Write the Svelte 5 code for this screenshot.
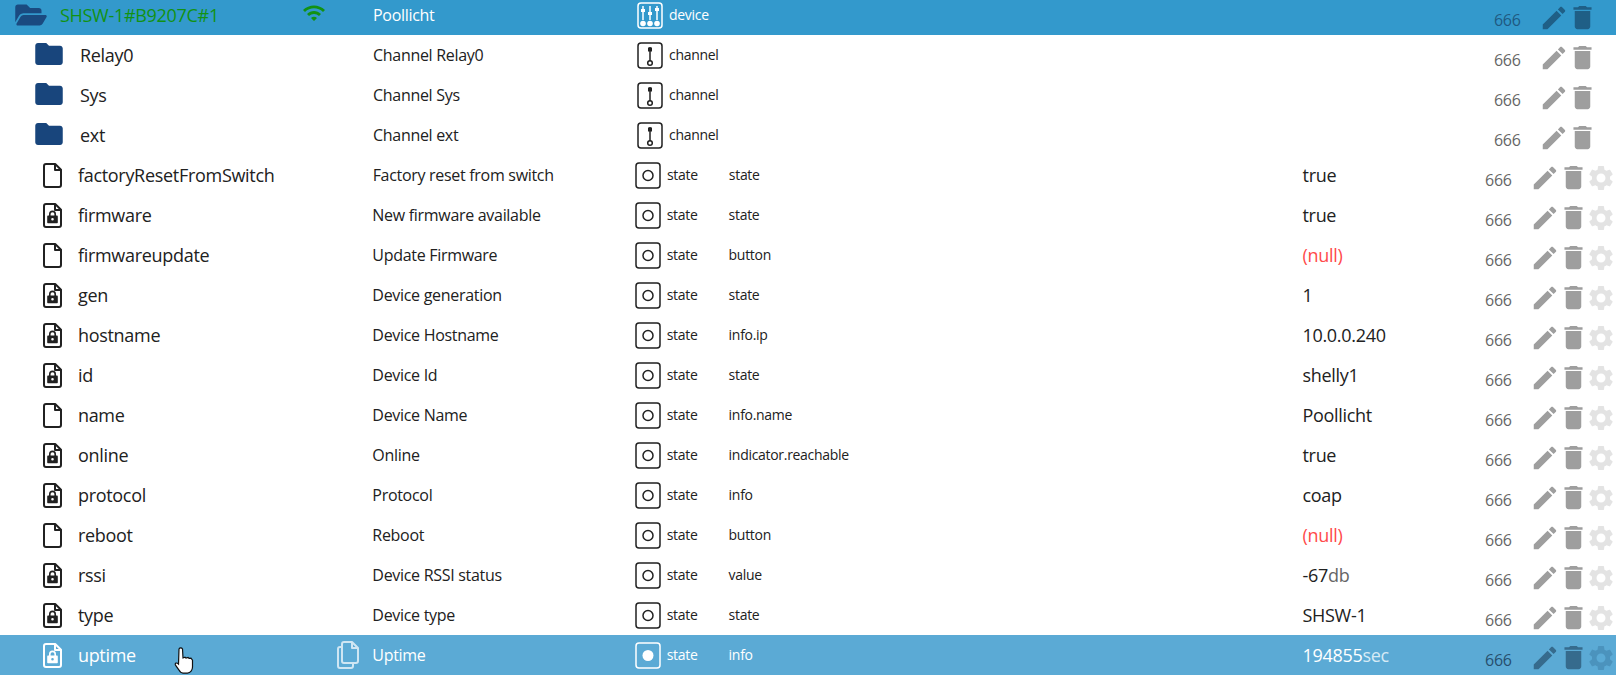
<script>
  const rows = [
    { kind: 'dev', icon: 'open', name: 'SHSW-1#B9207C#1', title: 'Poollicht', type: 'device' },
    { kind: 'chan', icon: 'folder', name: 'Relay0', title: 'Channel Relay0', type: 'channel' },
    { kind: 'chan', icon: 'folder', name: 'Sys', title: 'Channel Sys', type: 'channel' },
    { kind: 'chan', icon: 'folder', name: 'ext', title: 'Channel ext', type: 'channel' },
    { kind: 'st', icon: 'file', name: 'factoryResetFromSwitch', title: 'Factory reset from switch', type: 'state', role: 'state', value: 'true' },
    { kind: 'st', icon: 'lock', name: 'firmware', title: 'New firmware available', type: 'state', role: 'state', value: 'true' },
    { kind: 'st', icon: 'file', name: 'firmwareupdate', title: 'Update Firmware', type: 'state', role: 'button', value: '(null)', nul: true },
    { kind: 'st', icon: 'lock', name: 'gen', title: 'Device generation', type: 'state', role: 'state', value: '1' },
    { kind: 'st', icon: 'lock', name: 'hostname', title: 'Device Hostname', type: 'state', role: 'info.ip', value: '10.0.0.240' },
    { kind: 'st', icon: 'lock', name: 'id', title: 'Device Id', type: 'state', role: 'state', value: 'shelly1' },
    { kind: 'st', icon: 'file', name: 'name', title: 'Device Name', type: 'state', role: 'info.name', value: 'Poollicht' },
    { kind: 'st', icon: 'lock', name: 'online', title: 'Online', type: 'state', role: 'indicator.reachable', value: 'true' },
    { kind: 'st', icon: 'lock', name: 'protocol', title: 'Protocol', type: 'state', role: 'info', value: 'coap' },
    { kind: 'st', icon: 'file', name: 'reboot', title: 'Reboot', type: 'state', role: 'button', value: '(null)', nul: true },
    { kind: 'st', icon: 'lock', name: 'rssi', title: 'Device RSSI status', type: 'state', role: 'value', value: '-67', unit: 'db' },
    { kind: 'st', icon: 'lock', name: 'type', title: 'Device type', type: 'state', role: 'state', value: 'SHSW-1' },
    { kind: 'st', hover: true, icon: 'lock', name: 'uptime', title: 'Uptime', type: 'state', role: 'info', value: '194855', unit: 'sec' }
  ];
</script>

<div class="list">
  {#each rows as r}
    <div class="row {r.kind}" class:hover={r.hover}>
      <div class="ico">
        {#if r.icon === 'open'}
          <svg class="open" viewBox="0 0 576 512"><path d="M572.694 292.093L500.27 416.248A63.997 63.997 0 0 1 444.989 448H45.025c-18.523 0-30.064-20.093-20.731-36.093l72.424-124.155A64 64 0 0 1 152 256h399.964c18.523 0 30.064 20.093 20.73 36.093zM152 224h328v-48c0-26.51-21.49-48-48-48H272l-64-64H48C21.49 64 0 85.49 0 112v278.046l69.077-118.418C86.214 242.25 117.989 224 152 224z"/></svg>
        {:else if r.icon === 'folder'}
          <svg class="folder" viewBox="2 4 20 16"><path d="M10 4H4c-1.1 0-1.99.9-1.99 2L2 18c0 1.1.9 2 2 2h16c1.1 0 2-.9 2-2V8c0-1.1-.9-2-2-2h-8l-2-2z"/></svg>
        {:else}
          <svg class="file" viewBox="0 0 19 25">
            <path class="outline" d="M3 1h9.2L18 6.8V22a2 2 0 0 1-2 2H3a2 2 0 0 1-2-2V3a2 2 0 0 1 2-2z"/>
            <path class="outline" d="M12 1v6h6"/>
            {#if r.icon === 'lock'}
              <path class="lockbody" d="M5 12.6h1v-1.5a3.5 3.5 0 0 1 7 0v1.5h1a.8.8 0 0 1 .8.8v6a.8.8 0 0 1-.8.8H5a.8.8 0 0 1-.8-.8v-6a.8.8 0 0 1 .8-.8zm2.6 0h3.8v-1.5a1.9 1.9 0 0 0-3.8 0zM9.5 15a1.3 1.3 0 1 0 0 2.6 1.3 1.3 0 0 0 0-2.6z" fill-rule="evenodd"/>
            {/if}
          </svg>
        {/if}
      </div>
      <div class="name">{r.name}</div>
      <div class="conn">
        {#if r.kind === 'dev'}
          <svg viewBox="0 0 24 24"><path d="M1 9l2 2c4.97-4.97 13.03-4.97 18 0l2-2C16.93 2.93 7.08 2.93 1 9zm8 8l3 3 3-3c-1.65-1.66-4.34-1.66-6 0zm-4-4l2 2c2.76-2.76 7.24-2.76 10 0l2-2C15.14 9.14 8.87 9.14 5 13z"/></svg>
        {/if}
        {#if r.hover}
          <svg class="copy" viewBox="0 0 22 28"><path d="M7 1h8l6 6v13a2 2 0 0 1-2 2H7a2 2 0 0 1-2-2V3a2 2 0 0 1 2-2z"/><path d="M15 1v6h6"/><path d="M5 6H3a2 2 0 0 0-2 2v17a2 2 0 0 0 2 2h11a2 2 0 0 0 2-2v-3"/></svg>
        {/if}
      </div>
      <div class="title">{r.title}</div>
      <div class="tico">
        <svg viewBox="0 0 26 27">
          <rect class="box" x="1" y="1" width="24" height="25" rx="3"/>
          {#if r.kind === 'dev'}
            <path class="ln" d="M6 4v14M13 4v14M20 4v14"/>
            <path class="fl" d="M4 7h4v3H4zM11 10h4v3h-4zM18 6h4v3h-4z"/>
            <circle class="fl" cx="6" cy="21.5" r="2.8"/><circle class="fl" cx="13" cy="21.5" r="2.8"/><circle class="fl" cx="20" cy="21.5" r="2.8"/>
          {:else if r.kind === 'chan'}
            <path class="ln" d="M13 5v14"/>
            <path class="fl" d="M11 5.500h4v4h-4z"/>
            <circle class="rg" cx="13" cy="21" r="2.300"/>
          {:else if r.hover}
            <circle class="fl" cx="13" cy="13.500" r="5.500"/>
          {:else}
            <circle class="rg" cx="13" cy="13.500" r="5"/>
          {/if}
        </svg>
      </div>
      <div class="type">{r.type}</div>
      <div class="role">{r.role ?? ''}</div>
      <div class="value" class:nul={r.nul}>{r.value ?? ''}{#if r.unit}<span class="unit"> {r.unit}</span>{/if}</div>
      <div class="perm">666</div>
      <svg class="act pen" viewBox="0 0 24 24"><path d="M3 17.25V21h3.75L17.81 9.94l-3.75-3.75L3 17.25zM20.71 7.04c.39-.39.39-1.02 0-1.41l-2.34-2.34c-.39-.39-1.02-.39-1.41 0l-1.83 1.83 3.75 3.75 1.83-1.83z"/></svg>
      <svg class="act trash" viewBox="0 0 24 24"><path d="M6 19c0 1.100.9 2 2 2h8c1.100 0 2-.9 2-2V7H6v12zM19 4h-3.500l-1-1h-5l-1 1H5v2h14V4z"/></svg>
      {#if r.kind === 'st'}
        <svg class="act gear" viewBox="0 0 24 24"><path d="M19.140 12.940c.04-.3.06-.61.06-.94 0-.32-.02-.64-.07-.94l2.030-1.580c.18-.14.23-.41.12-.61l-1.920-3.320c-.12-.22-.37-.29-.59-.22l-2.390.96c-.5-.38-1.030-.7-1.620-.94l-.36-2.540c-.04-.24-.24-.41-.48-.41h-3.840c-.24 0-.43.17-.47.41l-.36 2.540c-.59.24-1.130.57-1.620.94l-2.390-.96c-.22-.08-.47 0-.59.22L2.740 8.870c-.12.21-.08.47.12.61l2.030 1.580c-.05.3-.09.63-.09.94s.02.64.07.94l-2.030 1.580c-.18.14-.23.41-.12.61l1.920 3.320c.12.22.37.29.59.22l2.390-.96c.5.38 1.030.7 1.620.94l.36 2.540c.05.24.24.41.48.41h3.840c.24 0 .44-.17.47-.41l.36-2.540c.59-.24 1.130-.56 1.620-.94l2.390.96c.22.08.47 0 .59-.22l1.920-3.320c.12-.22.07-.47-.12-.61l-2.010-1.580zM12 15.600c-1.980 0-3.600-1.620-3.600-3.600s1.620-3.600 3.600-3.600 3.600 1.620 3.600 3.600-1.620 3.600-3.600 3.600z"/></svg>
      {/if}
      {#if r.hover}
        <svg class="hand" viewBox="0 0 20 30"><path d="M5 3a2 2 0 0 1 3.500 0l.5 9 2-.8 1 .8 2-.6 1 .9 2-.2 1.500 2v7c0 3-2 6-5 6H9c-2 0-3-1-4-3l-3.500-5c-1-2 1-3 3-1z"/></svg>
      {/if}
    </div>
  {/each}
</div>

<style>
  :global(body) { margin: 0; background: #fff; overflow: hidden; }
  .list {
    margin-top: -5px;
    font-family: "Open Sans", "Noto Sans", sans-serif;
    color: #212121;
    letter-spacing: -0.3px;
  }
  .row {
    position: relative;
    display: flex;
    align-items: center;
    height: 40px;
    white-space: nowrap;
  }
  .dev { background: #3399cc; color: #fff; }
  .hover { background: #5baad5; color: #fff; }

  .ico { display: flex; align-items: center; }
  .st .ico { padding-left: 43px; width: 35px; }
  .chan .ico { padding-left: 35px; width: 45px; }
  .dev .ico { padding-left: 15px; width: 45px; }
  svg { display: block; }
  .open { width: 32px; height: 28px; fill: #1a4a80; }
  .folder { width: 28px; height: 22px; fill: #18457c; margin-top: -3px; }
  .file { width: 19px; height: 25px; }
  .outline { fill: none; stroke: currentColor; stroke-width: 2; stroke-linejoin: round; }
  .lockbody { fill: currentColor; }

  .name { font-size: 18px; }
  .st .name { width: 170px; }
  .chan .name { width: 168px; }
  .dev .name { width: 168px; color: #129212; }

  .conn { display: flex; align-items: center; justify-content: flex-end; width: 125px; }
  .chan .conn { width: 125px; }
  .dev .conn svg { width: 24px; height: 24px; fill: #129212; margin-right: 47px; margin-top: -4px; }
  .dev .conn { width: 145px; }
  .copy { width: 22px; height: 28px; fill: none; stroke: #cfe6f3; stroke-width: 2; stroke-linejoin: round; margin-right: 13px; }

  .title { font-size: 16px; width: 263px; }
  .chan .title, .dev .title { width: 264px; }

  .tico { width: 32px; }
  .tico svg { width: 26px; height: 27px; }
  .box { fill: none; stroke: currentColor; stroke-width: 1.500; }
  .ln { stroke: currentColor; stroke-width: 1.500; fill: none; }
  .fl { fill: currentColor; }
  .rg { fill: none; stroke: currentColor; stroke-width: 1.500; }

  .type { font-size: 14px; width: 62px; margin-top: -1px; }
  .role { font-size: 14px; width: 575px; margin-top: -1px; }
  .value { font-size: 18px; width: 183px; }
  .chan .type, .dev .type { width: 62px; }
  .nul { color: #ff4a4a; }
  .unit { color: #666; }
  .hover .unit { color: #d6eaf5; }

  .perm { font-size: 16px; color: #666; width: 37px; margin-top: 9px; }
  .chan .perm, .dev .perm { margin-left: 5px; }
  .dev .perm { color: #1f5a82; }
  .hover .perm { color: #274f6e; }

  .act { fill: #9e9e9e; margin-top: 5px; flex: none; }
  .pen { width: 30px; height: 30px; margin-left: 8px; }
  .trash { width: 31px; height: 31px; margin-left: -2px; }
  .gear { width: 30px; height: 30px; margin-left: -3px; fill: #e3e3e3; }
  .dev .act { fill: #1f5f86; }
  .hover .act { fill: #366b8d; }
  .hover .gear { fill: #4b93bd; }

  .hand {
    position: absolute;
    left: 174px;
    top: 11px;
    width: 20px;
    height: 30px;
    fill: #fff;
    stroke: #111;
    stroke-width: 1.200;
  }
</style>
